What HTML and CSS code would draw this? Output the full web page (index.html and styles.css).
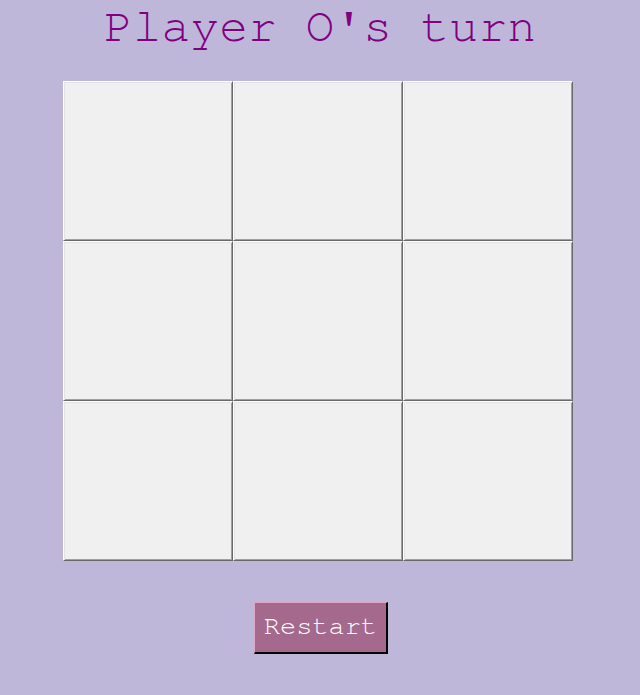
FILE: index.html
```html
<!DOCTYPE html>
<html>
<head>
<meta charset="utf-8">
<link rel="stylesheet" href="styles.css">
</head>
<body>
<div class="page">
  <h1 class="status">Player O's turn</h1>
  <div class="board">
    <button class="cell"></button>
    <button class="cell"></button>
    <button class="cell"></button>
    <button class="cell"></button>
    <button class="cell"></button>
    <button class="cell"></button>
    <button class="cell"></button>
    <button class="cell"></button>
    <button class="cell"></button>
  </div>
  <div class="actions">
    <button class="restart">Restart</button>
  </div>
</div>
</body>
</html>
```
FILE: styles.css
```css
html, body {
  margin: 0;
  padding: 0;
  background: #bfb7da;
}
.page {
  width: 640px;
  height: 695px;
  display: flex;
  flex-direction: column;
  font-family: "Nimbus Mono PS", "Nimbus Mono L", "FreeMono", "Courier", "Courier New", "Liberation Mono", monospace;
}
.status {
  margin: 0;
  padding-top: 0;
  font-size: 48px;
  font-weight: normal;
  line-height: 54px;
  color: #800080;
  text-align: center;
}
.board {
  margin-top: 27px;
  margin-left: 63px;
  width: 510px;
  display: grid;
  grid-template-columns: repeat(3, 170px);
  grid-template-rows: repeat(3, 160px);
}
.cell {
  margin: 0;
  padding: 0;
  background: #f0f0f0;
  border-style: solid;
  border-width: 1px;
  border-color: #ffffff #696969 #696969 #ffffff;
  box-shadow: inset 1px 1px 0 #e3e3e3, inset -1px -1px 0 #a0a0a0;
}
.actions {
  margin-top: 41px;
  display: flex;
  justify-content: center;
  padding-left: 2px;
}
.restart {
  margin: 0;
  padding: 8px 9px 11px 9px;
  font-family: inherit;
  font-size: 27px;
  line-height: 30px;
  color: #ffffff;
  background: #a6698e;
  border-style: solid;
  border-width: 1px 2px 2px 1px;
  border-color: #dca6c6 #000000 #000000 #dca6c6;
}
```
